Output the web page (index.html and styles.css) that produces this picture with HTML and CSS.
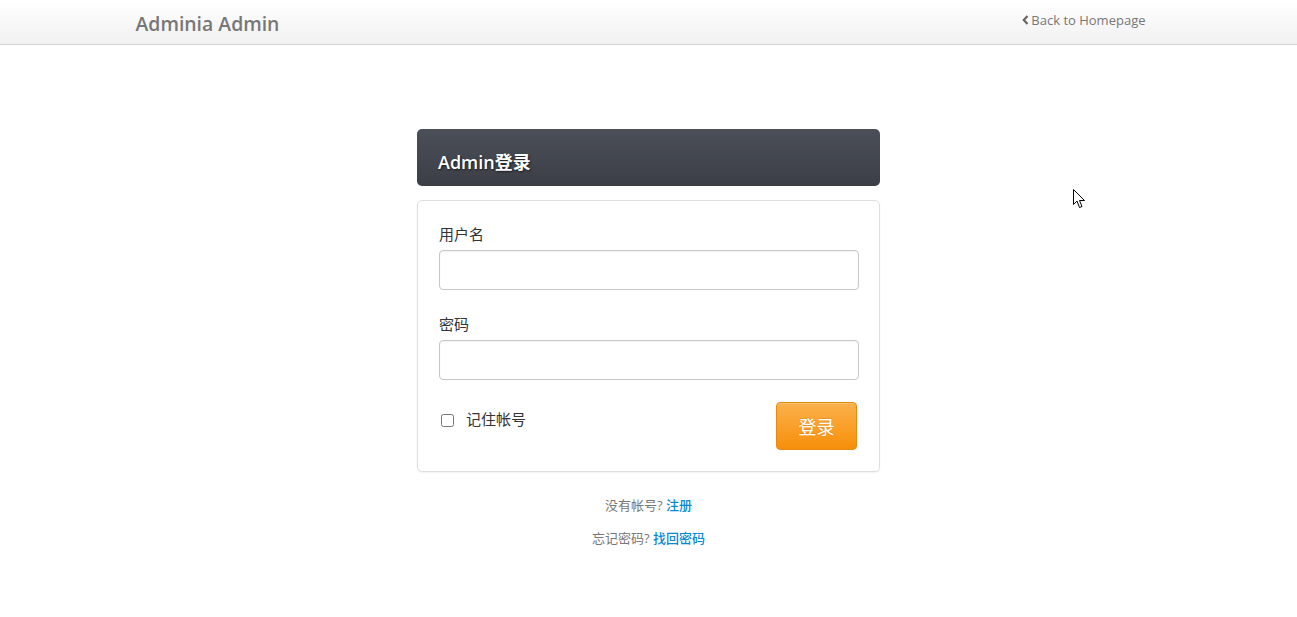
FILE: index.html
```html
<!DOCTYPE html>
<html>
<head>
<meta charset="utf-8">
<link rel="stylesheet" href="styles.css">
</head>
<body>
<header class="navbar">
  <div class="container nav-inner">
    <a class="brand" href="#">Adminia Admin</a>
    <a class="back" href="#"><svg class="chev" width="7" height="10" viewBox="0 0 7 10"><path d="M5.5 1 L1.8 5 L5.5 9" fill="none" stroke="#666" stroke-width="2.2"/></svg>Back to Homepage</a>
  </div>
</header>

<main class="account">
  <div class="login-head"><h1>Admin登录</h1></div>
  <form class="login-body">
    <div class="field">
      <label>用户名</label>
      <input type="text" class="input">
    </div>
    <div class="field">
      <label>密码</label>
      <input type="password" class="input">
    </div>
    <div class="actions">
      <label class="remember"><input type="checkbox" class="check"><span>记住帐号</span></label>
      <button type="button" class="btn">登录</button>
    </div>
  </form>
  <div class="extra">
    <p>没有帐号? <a href="#">注册</a></p>
    <p>忘记密码? <a href="#">找回密码</a></p>
  </div>
</main>

<svg class="cursor" width="13" height="20" viewBox="0 0 13 20"><path d="M0.5 0.5 L0.5 15.5 L4 12 L6.5 18.5 L9 17.5 L6.5 11.5 L11.5 11.5 Z" fill="#fff" stroke="#000" stroke-width="1"/></svg>
</body>
</html>
```

FILE: styles.css
```css
* { box-sizing: border-box; }
html, body { margin: 0; padding: 0; background: #fff; }
body {
  font-family: "Open Sans", "Noto Sans CJK SC", sans-serif;
  font-size: 14px;
  color: #333;
  position: relative;
  min-height: 617px;
}
a { text-decoration: none; }

.navbar {
  height: 45px;
  background: linear-gradient(to bottom, #ffffff, #f1f1f1);
  border-bottom: 1px solid #d4d4d4;
}
.container {
  width: 1024px;
  margin: 0 auto;
}
.nav-inner {
  display: flex;
  justify-content: space-between;
  align-items: center;
  height: 44px;
}
.brand {
  font-size: 19.4px;
  font-weight: 600;
  color: #777;
  margin-top: 2px;
  margin-left: -1px;
}
.back {
  font-size: 13px;
  color: #777;
  margin-right: 15px;
  margin-top: -4px;
  display: flex;
  align-items: center;
}
.chev { margin-right: 2px; }

.account {
  width: 463px;
  margin: 84px auto 0;
}
.login-head {
  height: 57px;
  border-radius: 5px;
  background: linear-gradient(to bottom, #4b4f58, #3b3e45);
  display: flex;
  align-items: center;
  padding: 6px 21px 0;
}
.login-head h1 {
  margin: 0;
  font-size: 18px;
  font-weight: 600;
  color: #fff;
  text-shadow: 1px 1px 2px rgba(0,0,0,0.6);
}
.login-body {
  margin-top: 14px;
  border: 1px solid #dedede;
  border-radius: 5px;
  box-shadow: 0 1px 2px rgba(0,0,0,0.06);
  padding: 23px 21px 21px;
  display: flex;
  flex-direction: column;
}
.field { display: flex; flex-direction: column; margin-bottom: 10px; }
.field label {
  font-size: 15px;
  color: #333;
  line-height: 21px;
  margin-bottom: 5px;
}
.field + .field { margin-top: 14px; }
.input {
  width: 420px;
  height: 40px;
  border: 1px solid #c8c8c8;
  border-radius: 4px;
  box-shadow: inset 0 1px 2px rgba(0,0,0,0.06);
  font-size: 14px;
  padding: 4px 8px;
}
.actions {
  display: flex;
  justify-content: space-between;
  align-items: flex-start;
  margin-top: 12px;
}
.remember {
  display: flex;
  align-items: center;
  margin-top: 6px;
  margin-left: 1px;
}
.check {
  width: 13px;
  height: 13px;
  margin: 3px 12px 0 1px;
}
.remember span { font-size: 15px; color: #333; }
.btn {
  width: 81px;
  height: 48px;
  margin-right: 1px;
  border: 1px solid #e38a12;
  border-radius: 4px;
  background: linear-gradient(to bottom, #fbb14b, #f78f0a);
  color: #fff;
  font-family: "Open Sans", "Noto Sans CJK SC", sans-serif;
  font-size: 18px;
  text-shadow: 0 -1px 0 rgba(0,0,0,0.1);
  box-shadow: inset 0 1px 0 rgba(255,255,255,0.2);
}
.extra {
  text-align: center;
  font-size: 13px;
  color: #777;
  margin-top: 24px;
}
.extra p { margin: 0 0 14px; line-height: 19px; }
.extra a { color: #0a8ad1; font-weight: 500; }

.cursor {
  position: absolute;
  left: 1073px;
  top: 189px;
}
```
